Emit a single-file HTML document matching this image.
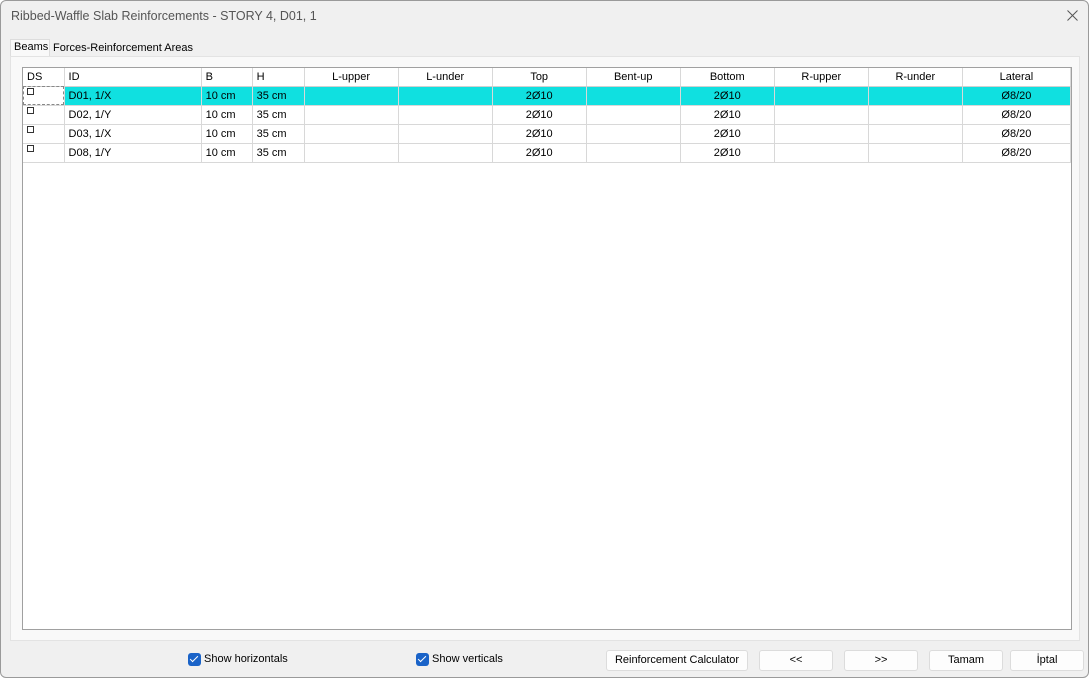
<!DOCTYPE html><html><head><style>
*{margin:0;padding:0;box-sizing:border-box}
body{width:1089px;height:678px;background:#fff;font-family:"Liberation Sans",sans-serif;font-size:11px;color:#000;position:relative;overflow:hidden}
.win{position:absolute;left:0;top:0;width:1089px;height:678px;background:#f0f0f0;border:1px solid #9a9a9a;border-radius:6px}
.a{position:absolute}
.title{left:10px;top:8px;font-size:12.5px;color:#555}
.panel{left:9px;top:55px;width:1070px;height:585px;background:#f9f9f9;border:1px solid #e3e3e3}
table{position:absolute;left:22px;top:67px;width:1048px;border-collapse:collapse;background:#fff;table-layout:fixed}
.tb{position:absolute;left:21px;top:66px;width:1050px;height:563px;background:#fff;border:1px solid #a0a0a0}
td{height:19px;border-right:1px solid #d8d8d8;border-bottom:1px solid #d8d8d8;padding:0 4px;white-space:nowrap;font-size:11px}
tr.h td{height:18px;border-bottom:1px solid #d0d0d0}
.c{text-align:center}
.sel td{background:#10e0e0}
.cb{display:inline-block;width:7px;height:7px;border:1px solid #333;vertical-align:top;margin-top:-2px}
.btn{position:absolute;top:649px;height:21px;background:#fdfdfd;border:1px solid #dcdcdc;border-radius:3px;text-align:center;line-height:19px;font-size:11px}
.chk{position:absolute;top:652px;width:13px;height:13px;background:#1a63c8;border-radius:3px}
.chk:after{content:"";position:absolute;left:4px;top:1px;width:3px;height:7px;border:solid #fff;border-width:0 1.5px 1.5px 0;transform:rotate(45deg)}
</style></head><body><div class="win">
<div class="a title">Ribbed-Waffle Slab Reinforcements - STORY 4, D01, 1</div>
<svg class="a" style="left:1066px;top:9px" width="11" height="11"><path d="M0.5 0.5L10.5 10.5M10.5 0.5L0.5 10.5" stroke="#555" stroke-width="1"/></svg>
<div class="a" style="left:9px;top:38px;width:40px;height:18px;background:#f9f9f9;border:1px solid #ddd;border-bottom:none"></div>
<div class="a" style="left:13px;top:40px;font-size:11px">Beams</div>
<div class="a" style="left:52px;top:41px;font-size:11px">Forces-Reinforcement Areas</div>
<div class="a panel"></div>
<div class="tb"></div>
<table>
<colgroup><col style="width:41px"><col style="width:137px"><col style="width:51px"><col style="width:52px"><col style="width:94px"><col style="width:94px"><col style="width:94px"><col style="width:94px"><col style="width:94px"><col style="width:94px"><col style="width:94px"><col style="width:108px"></colgroup>
<tr class="h"><td>DS</td><td>ID</td><td>B</td><td>H</td><td class="c">L-upper</td><td class="c">L-under</td><td class="c">Top</td><td class="c">Bent-up</td><td class="c">Bottom</td><td class="c">R-upper</td><td class="c">R-under</td><td class="c">Lateral</td></tr>
<tr class="sel"><td style="background:#fff;outline:1px dashed #888;outline-offset:-1px"><span class="cb"></span></td><td>D01, 1/X</td><td>10 cm</td><td>35 cm</td><td></td><td></td><td class="c">2Ø10</td><td></td><td class="c">2Ø10</td><td></td><td></td><td class="c">Ø8/20</td></tr>
<tr><td><span class="cb"></span></td><td>D02, 1/Y</td><td>10 cm</td><td>35 cm</td><td></td><td></td><td class="c">2Ø10</td><td></td><td class="c">2Ø10</td><td></td><td></td><td class="c">Ø8/20</td></tr>
<tr><td><span class="cb"></span></td><td>D03, 1/X</td><td>10 cm</td><td>35 cm</td><td></td><td></td><td class="c">2Ø10</td><td></td><td class="c">2Ø10</td><td></td><td></td><td class="c">Ø8/20</td></tr>
<tr><td><span class="cb"></span></td><td>D08, 1/Y</td><td>10 cm</td><td>35 cm</td><td></td><td></td><td class="c">2Ø10</td><td></td><td class="c">2Ø10</td><td></td><td></td><td class="c">Ø8/20</td></tr>
</table>
<div class="chk" style="left:187px"></div><div class="a" style="left:203px;top:652px">Show horizontals</div>
<div class="chk" style="left:415px"></div><div class="a" style="left:431px;top:652px">Show verticals</div>
<div class="btn" style="left:605px;width:142px">Reinforcement Calculator</div>
<div class="btn" style="left:758px;width:74px">&lt;&lt;</div>
<div class="btn" style="left:843px;width:74px">&gt;&gt;</div>
<div class="btn" style="left:928px;width:74px">Tamam</div>
<div class="btn" style="left:1009px;width:74px">İptal</div>
</div></body></html>
